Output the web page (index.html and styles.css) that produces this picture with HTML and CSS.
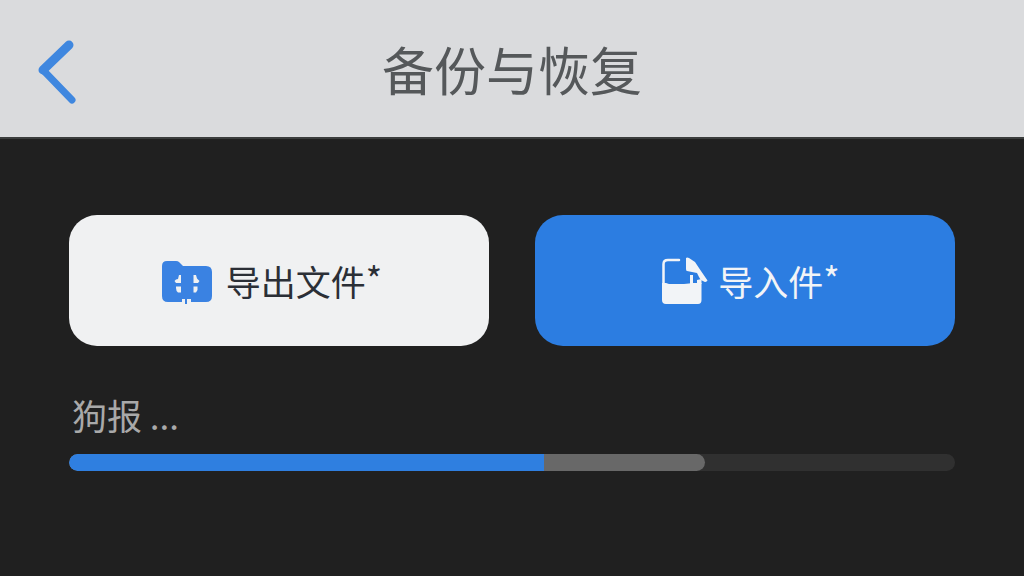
FILE: index.html
```html
<!DOCTYPE html>
<html lang="zh-CN">

<head>
    <meta charset="UTF-8">
    <meta name="viewport" content="width=device-width, initial-scale=1.0">
    <title>备份与恢复</title>
    <link rel="stylesheet" href="styles.css">
</head>

<body>
    <header class="header">
        <button type="button" class="back" aria-label="返回">
            <svg width="40" height="64" viewBox="0 0 40 64" fill="none" stroke="#3f87df" stroke-linecap="round" stroke-linejoin="round">
                <path d="M31 5L5 30" stroke-width="9"/>
                <path d="M5 30L34 60" stroke-width="7"/>
            </svg>
        </button>
        <h1>备份与恢复</h1>
    </header>

    <main class="content">
        <div class="actions">
            <button type="button" class="action export">
                <!-- Folder icon -->
                <svg width="50" height="47" viewBox="0 -4 50 47">
                    <path fill="#3a82e2" d="M5 0H14Q16 0 17 1L21 5H44Q50 5 50 11V35Q50 41 44 41H6Q0 41 0 35V5Q0 0 5 0Z"/>
                    <path fill="#f0f1f2" d="M17 14H19V22H14L12.500 20L14 18.500L16 18ZM14 25.500H19V31.500H16Q14 30 14 27ZM31.500 14H34L35 17.500L37.500 20L36 22H31.500ZM31.500 25.500H35.500V29L34 31.500H31.500ZM20 38H23V43H20ZM25 38H29V43H25Z"/>
                    <path fill="#3a82e2" d="M23 38H25V43H23Z"/>
                </svg>
                <span>导出文件<span class="mark">*</span></span>
            </button>
            <button type="button" class="action import">
                <!-- Document icon -->
                <svg width="46" height="48" viewBox="0 0 46 48" fill="#f2f4f7">
                    <path fill="none" stroke="#f2f4f7" stroke-width="2.500" stroke-linecap="round" d="M17 3H6Q1.500 3 1.500 7V28"/>
                    <path d="M0 26H4L7 27H22L27 26.500L30 26H39.500V43Q39.500 47 36 47H4Q0 47 0 43Z"/>
                    <path d="M24 1Q25 0 27 1L33 5L39 14L45.500 23.500Q44 26 41 24Q38 23 37 20L35 16L25 14Q24 14 24 12Z"/>
                    <path d="M28 18H31V27H28ZM35 23L39.500 22V27H35Z"/>
                </svg>
                <span>导入件<span class="mark">*</span></span>
            </button>
        </div>

        <section class="status">
            <p id="status-label">狗报 ...</p>
            <div class="track" role="progressbar" aria-labelledby="status-label" aria-valuemin="0" aria-valuemax="100" aria-valuenow="54">
                <div class="buffer" style="width: 71.8%">
                    <div class="fill" style="width: 74.6%"></div>
                </div>
            </div>
        </section>
    </main>
</body>

</html>
```

FILE: styles.css
```css
* {
    box-sizing: border-box;
}

body {
    margin: 0;
    min-height: 100vh;
    background-color: #202020;
    font-family: "Noto Sans CJK SC", sans-serif;
}

.header {
    display: grid;
    grid-template-columns: 1fr auto 1fr;
    align-items: center;
    height: 139px;
    padding: 0 38px;
    background-color: #dadbdd;
    border-bottom: 2px solid #3b3d3d;
}

.header h1 {
    margin: 0;
    color: #55585a;
    font-size: 52px;
    font-weight: 400;
    line-height: 72px;
}

.back {
    justify-self: start;
    display: flex;
    padding: 6px 0 0;
    border: none;
    background: none;
    cursor: pointer;
}

.content {
    padding: 76px 69px;
}

.actions {
    display: grid;
    grid-template-columns: 1fr 1fr;
    gap: 46px;
}

.action {
    display: flex;
    align-items: center;
    justify-content: center;
    height: 131px;
    border: none;
    border-radius: 28px;
    font-family: inherit;
    font-size: 35px;
    line-height: 52px;
    cursor: pointer;
}

.export {
    gap: 14px;
    padding: 0 14px 0 0;
    background-color: #f0f1f2;
    color: #2b2f36;
}

.import {
    gap: 10px;
    padding: 0 8px 0 20px;
    background-color: #2c7de1;
    color: #f2f4f7;
}

.mark {
    line-height: 1;
    vertical-align: 3px;
}

.status {
    margin-top: 43px;
}

.status p {
    margin: 0 0 13px;
    padding-left: 3px;
    color: #a9a9a9;
    font-size: 35px;
    line-height: 52px;
}

.track {
    height: 17px;
    border-radius: 9px;
    background-color: #303030;
    overflow: hidden;
}

.buffer {
    height: 100%;
    border-radius: 9px;
    background-color: #686868;
    overflow: hidden;
}

.fill {
    height: 100%;
    background-color: #2f7fe0;
}
```
